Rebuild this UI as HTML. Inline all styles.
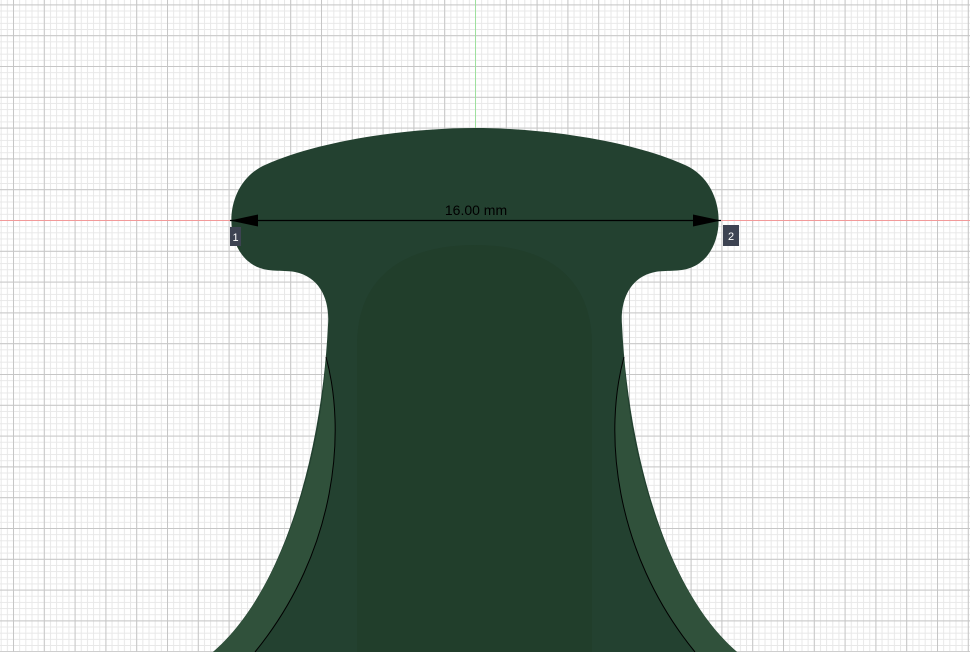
<!DOCTYPE html>
<html><head><meta charset="utf-8"><style>
html,body{margin:0;padding:0;width:970px;height:652px;overflow:hidden;background:#fff}
svg{display:block}
</style></head><body>
<svg width="970" height="652" viewBox="0 0 970 652" xmlns="http://www.w3.org/2000/svg">
<defs>
<pattern id="minor" x="13" y="4.4" width="6.16" height="6.16" patternUnits="userSpaceOnUse">
<path d="M0.5 0V6.16M0 0.5H6.16" stroke="#e8e8e8" stroke-width="1" fill="none"/>
</pattern>
<pattern id="major" x="13" y="4.4" width="30.8" height="30.8" patternUnits="userSpaceOnUse">
<path d="M0.5 0V30.8M0 0.5H30.8" stroke="#c6c6c6" stroke-width="1" fill="none"/>
</pattern>
</defs>
<rect width="970" height="652" fill="#fff"/>
<rect width="970" height="652" fill="url(#minor)"/>
<rect width="970" height="652" fill="url(#major)"/>
<line x1="0" y1="220.5" x2="970" y2="220.5" stroke="#f29a9a" stroke-width="1"/>
<line x1="475.5" y1="0" x2="475.5" y2="652" stroke="#9ee09e" stroke-width="1"/>
<path d="M475,128 C410,128 320,140 265,165 C220,185 222,255 260,268 C270,272 285,270 295,272 C320,277 330,300 328,325 C322,450 285,590 213,652 L737,652 C665,590 628,450 622,325 C620,300 630,277 655,272 C665,270 680,272 690,268 C728,255 730,185 685,165 C630,140 540,128 475,128 Z" fill="#234130"/>
<path d="M357,652 V345 C357,280 400,245 475,245 C550,245 592,280 592,345 V652 Z" fill="#213e2b"/>
<path d="M326,357 C346,430 338,550 255,652 L213,652 C285,590 322,450 326,357 Z" fill="#30513b"/>
<path d="M624,357 C604,430 612,550 695,652 L737,652 C665,590 628,450 624,357 Z" fill="#30513b"/>
<path d="M326,357 C346,430 338,550 255,652" stroke="#000" stroke-width="1" fill="none"/>
<path d="M624,357 C604,430 612,550 695,652" stroke="#000" stroke-width="1" fill="none"/>
<line x1="230" y1="220.5" x2="721" y2="220.5" stroke="#000" stroke-width="1.2"/>
<polygon points="230,220.5 258,214.5 258,226.5" fill="#000"/>
<polygon points="721,220.5 693,214.5 693,226.5" fill="#000"/>
<text x="476" y="215" font-family="Liberation Sans, sans-serif" font-size="14" text-anchor="middle" fill="#000">16.00 mm</text>
<rect x="230" y="227" width="11" height="19" fill="#3d4352"/>
<text x="235.5" y="241" font-family="Liberation Sans, sans-serif" font-size="11" text-anchor="middle" fill="#fff">1</text>
<rect x="723" y="225" width="16" height="21" fill="#3d4352"/>
<text x="731" y="240" font-family="Liberation Sans, sans-serif" font-size="11" text-anchor="middle" fill="#fff">2</text>
</svg>
</body></html>
